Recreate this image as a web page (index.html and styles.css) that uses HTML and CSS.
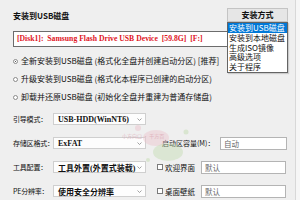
FILE: index.html
```html
<!DOCTYPE html>
<html lang="zh">
<head>
<meta charset="utf-8">
<link rel="stylesheet" href="styles.css">
</head>
<body>
<div class="app">
  <div class="main">
    <h1 class="title">安装到USB磁盘</h1>
    <div class="disk">[Disk1]:&nbsp; Samsung Flash Drive USB Device&nbsp; [59.8G]&nbsp; [F:]</div>
    <div class="opts">
      <div class="opt"><span class="radio on"></span>全新安装到USB磁盘 (格式化全盘并创建启动分区) [推荐]</div>
      <div class="opt"><span class="radio"></span>升级安装到USB磁盘 (格式化本程序已创建的启动分区)</div>
      <div class="opt"><span class="radio"></span>卸载并还原USB磁盘 (初始化全盘并重建为普通存储盘)</div>
    </div>
    <div class="form">
      <div class="row">
        <span class="lbl">引导模式：</span>
        <div class="sel"><span class="val">USB-HDD(WinNT6)</span><svg class="arr" width="5" height="3" viewBox="0 0 5 3"><path d="M0.5 0.5 L2.5 2.5 L4.5 0.5" fill="none" stroke="#8a8a8a" stroke-width="0.8"/></svg></div>
      </div>
      <div class="row">
        <span class="lbl">存储区格式：</span>
        <div class="sel"><span class="val">ExFAT</span><svg class="arr" width="5" height="3" viewBox="0 0 5 3"><path d="M0.5 0.5 L2.5 2.5 L4.5 0.5" fill="none" stroke="#8a8a8a" stroke-width="0.8"/></svg></div>
        <div class="right r2">
          <span class="lbl2">启动区容量(M)：</span>
          <div class="inp w2">自动</div>
        </div>
      </div>
      <div class="row">
        <span class="lbl">工具配置：</span>
        <div class="sel"><span class="val">工具外置(外置式装载)</span><svg class="arr" width="5" height="3" viewBox="0 0 5 3"><path d="M0.5 0.5 L2.5 2.5 L4.5 0.5" fill="none" stroke="#8a8a8a" stroke-width="0.8"/></svg></div>
        <div class="right r3">
          <span class="chk"></span><span class="lbl3">欢迎界面</span>
          <div class="inp w3">默认</div>
        </div>
      </div>
      <div class="row">
        <span class="lbl">PE分辨率：</span>
        <div class="sel"><span class="val">使用安全分辨率</span><svg class="arr" width="5" height="3" viewBox="0 0 5 3"><path d="M0.5 0.5 L2.5 2.5 L4.5 0.5" fill="none" stroke="#8a8a8a" stroke-width="0.8"/></svg></div>
        <div class="right r3">
          <span class="chk"></span><span class="lbl3">桌面壁纸</span>
          <div class="inp w3">默认</div>
        </div>
      </div>
    </div>
  </div>
  <svg class="mark" width="90" height="45" viewBox="0 0 90 45">
    <ellipse cx="38" cy="16" rx="13" ry="8" fill="#ecc3cd" opacity="0.45"/>
    <ellipse cx="50" cy="30" rx="15" ry="9" fill="#c3dcb2" opacity="0.45"/>
    <circle cx="20" cy="6" r="3" fill="#ecc3cd" opacity="0.5"/>
    <circle cx="68" cy="10" r="2.5" fill="#c3dcb2" opacity="0.5"/>
    <circle cx="30" cy="38" r="2" fill="#c3dcb2" opacity="0.5"/>
    <text x="4" y="16" font-size="5" fill="#dba5b2" opacity="0.7" font-family="Noto Sans CJK SC, sans-serif">小方向口 · 千方百</text>
  </svg>
  <div class="menu">
    <div class="menu-head">安装方式</div>
    <ul class="menu-list">
      <li class="sel-item">安装到USB磁盘</li>
      <li>安装到本地磁盘</li>
      <li>生成ISO镜像</li>
      <li>高级选项</li>
      <li>关于程序</li>
    </ul>
  </div>
</div>
</body>
</html>
```
FILE: styles.css
```css
* { box-sizing: border-box; margin: 0; padding: 0; }
html, body { width: 300px; height: 200px; overflow: hidden; }
body {
  background: #f6f6f6;
  font-family: "Noto Sans CJK SC", "Noto Sans", sans-serif;
  font-size: 8px;
  color: #111;
}
.app {
  position: relative;
  width: 296px;
  height: 200px;
  background: #efefef;
  border-right: 1px solid #d8d8d8;
}
.main {
  padding: 10px 0 0 13px;
  display: flex;
  flex-direction: column;
}
.title {
  font-size: 8px;
  font-weight: bold;
  line-height: 12px;
  height: 12px;
}
.disk {
  margin-top: 9px;
  width: 218px;
  height: 16px;
  background: #fff;
  border: 1px solid #6c6c6c;
  color: #e0141e;
  font-family: "Liberation Serif", serif;
  font-weight: bold;
  font-size: 7.7px;
  line-height: 14px;
  padding-left: 3px;
  white-space: nowrap;
  overflow: hidden;
}
.opts {
  margin-top: 8px;
  display: flex;
  flex-direction: column;
  gap: 6px;
}
.opt {
  display: flex;
  align-items: center;
  height: 12px;
  line-height: 12px;
  white-space: nowrap;
}
.radio {
  width: 5px;
  height: 5px;
  border-radius: 50%;
  border: 1px solid #8a8a8a;
  background: #fff;
  margin-right: 3px;
  position: relative;
  flex: none;
}
.radio.on::after {
  content: "";
  position: absolute;
  left: 1px; top: 1px;
  width: 1px; height: 1px;
  border-radius: 50%;
  background: #222;
}
.form {
  margin-top: 10px;
  display: flex;
  flex-direction: column;
  gap: 12px;
}
.row {
  display: flex;
  align-items: center;
  height: 12px;
}
.lbl {
  width: 40px;
  flex: none;
  white-space: nowrap;
  font-size: 7px;
  letter-spacing: -0.2px;
}
.sel {
  width: 93px;
  height: 12px;
  background: rgba(255,255,255,0.85);
  border: 1px solid #cfcfcf;
  display: flex;
  align-items: center;
  padding: 0 3px 0 4px;
  flex: none;
}
.val {
  flex: 1;
  font-family: "Liberation Serif", "Noto Sans CJK SC", serif;
  font-weight: bold;
  font-size: 8px;
  white-space: nowrap;
}
.arr { flex: none; }
.right {
  display: flex;
  align-items: center;
}
.r2 { margin-left: 16px; }
.r3 { margin-left: 11px; }
.lbl2 { width: 58px; white-space: nowrap; font-size: 7px; }
.lbl3 { width: 36px; white-space: nowrap; font-size: 7.5px; }
.chk {
  width: 6px;
  height: 6px;
  border: 1px solid #7a7a7a;
  background: #fff;
  margin-right: 2px;
  flex: none;
}
.inp {
  height: 13px;
  background: #fff;
  border: 1px solid #b4b4b4;
  color: #6a6a6a;
  padding-left: 3px;
  line-height: 11px;
  font-size: 7.5px;
}
.w2 { width: 67px; }
.w3 { width: 85px; }
.mark {
  position: absolute;
  left: 118px;
  top: 122px;
  pointer-events: none;
}
.menu {
  position: absolute;
  left: 227px;
  top: 8px;
  width: 61px;
}
.menu-head {
  height: 14px;
  background: #e6e6e6;
  border: 1px solid #c4c4c4;
  font-weight: bold;
  text-align: center;
  line-height: 12px;
}
.menu-list {
  list-style: none;
  margin-top: 0;
  background: #fff;
  border: 1px solid #646464;
  box-shadow: 1px 1px 1px rgba(0,0,0,0.15);
}
.menu-list li {
  height: 9.8px;
  line-height: 9.8px;
  padding-left: 1px;
  white-space: nowrap;
}
.menu-list li.sel-item {
  background: #0078d7;
  color: #fff;
}
```
